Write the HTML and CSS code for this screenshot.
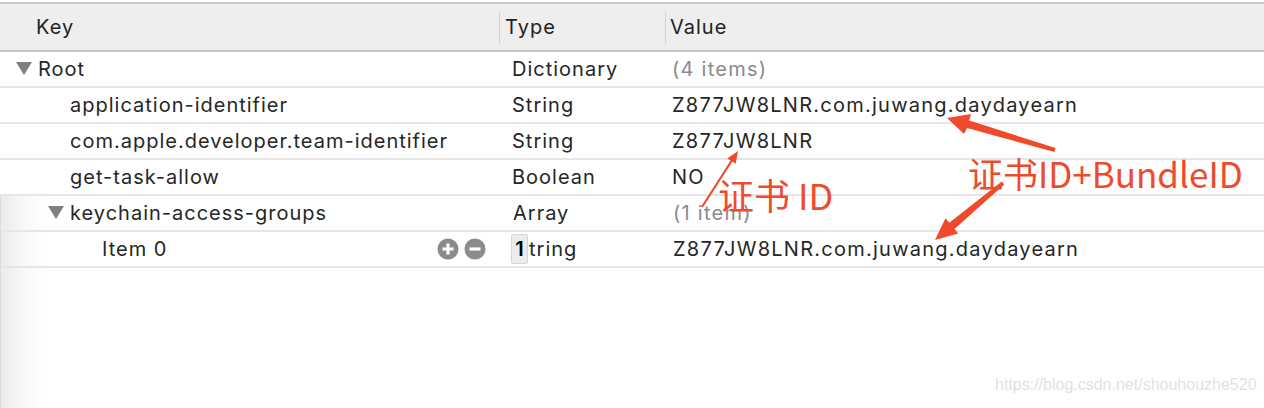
FILE: index.html
```html
<!DOCTYPE html>
<html>
<head>
<meta charset="utf-8">
<link rel="stylesheet" href="styles.css">
</head>
<body>
<div class="editor">
  <div class="header">
    <div class="hcell key-h">Key</div>
    <div class="hcell type-h">Type</div>
    <div class="hcell value-h">Value</div>
  </div>
  <div class="rows">
    <div class="row">
      <div class="cell key lvl0"><svg class="disc" viewBox="0 0 16 14"><polygon points="0,0 16,0 8,13" /></svg>Root</div>
      <div class="cell type">Dictionary</div>
      <div class="cell value muted">(4 items)</div>
    </div>
    <div class="row">
      <div class="cell key lvl1">application-identifier</div>
      <div class="cell type">String</div>
      <div class="cell value">Z877JW8LNR.com.juwang.daydayearn</div>
    </div>
    <div class="row">
      <div class="cell key lvl1">com.apple.developer.team-identifier</div>
      <div class="cell type">String</div>
      <div class="cell value">Z877JW8LNR</div>
    </div>
    <div class="row">
      <div class="cell key lvl1">get-task-allow</div>
      <div class="cell type">Boolean</div>
      <div class="cell value">NO</div>
    </div>
    <div class="lower">
      <div class="row">
        <div class="cell key lvl1b"><svg class="disc" viewBox="0 0 16 14"><polygon points="0,0 16,0 8,13" /></svg>keychain-access-groups</div>
        <div class="cell type">Array</div>
        <div class="cell value muted">(1 item)</div>
      </div>
      <div class="row">
        <div class="cell key lvl2">
          <span>Item 0</span>
          <span class="buttons">
            <svg class="btn" viewBox="0 0 22 22"><circle cx="11" cy="11" r="10.5"/><path d="M11 5.5v11M5.5 11h11"/></svg>
            <svg class="btn" viewBox="0 0 22 22"><circle cx="11" cy="11" r="10.5"/><path d="M5.5 11h11"/></svg>
          </span>
        </div>
        <div class="cell type"><span class="stepper">1</span>tring</div>
        <div class="cell value">Z877JW8LNR.com.juwang.daydayearn</div>
      </div>
      <div class="filler"></div>
    </div>
  </div>

  <div class="note note-id">证书 ID</div>
  <div class="note note-bundle">证书ID+BundleID</div>
  <svg class="arrows" viewBox="0 0 1264 408">
    <polygon points="947,118 971,114 969.2,120.4 1055.6,148.1 1054.4,151.9 967,128.1 964,134" />
    <polygon points="935,240 945.5,218.2 949.3,222.8 1001.7,181.5 1004.3,184.5 954.5,229 958.3,233.6" />
    <polygon points="738,151 735.7,163.8 732.4,161.6 702.9,207.6 701.1,206.4 730.6,160.6 727.3,158.4" />
  </svg>
  <div class="watermark">https://blog.csdn.net/shouhouzhe520</div>
</div>
</body>
</html>
```

FILE: styles.css
```css
html, body {
  margin: 0;
  padding: 0;
  background: #ffffff;
}

.editor {
  position: relative;
  width: 1264px;
  height: 408px;
  overflow: hidden;
  padding-top: 2px;
  box-sizing: border-box;
  font-family: "Inter", "Liberation Sans", sans-serif;
  font-size: 20px;
  letter-spacing: 1px;
  color: #262626;
  display: flex;
  flex-direction: column;
}

.header {
  display: grid;
  grid-template-columns: 499px 166px 1fr;
  height: 46px;
  background: #eeeeee;
  border-top: 2px solid #c9c9c9;
  border-bottom: 2px solid #c7c7c7;
  align-items: center;
}

.hcell {
  height: 100%;
  display: flex;
  align-items: center;
  color: #222222;
}

.key-h {
  padding-left: 36px;
}

.type-h,
.value-h {
  position: relative;
  padding-left: 6px;
}

.value-h {
  padding-left: 5px;
}

.type-h::before,
.value-h::before {
  content: "";
  position: absolute;
  left: 0;
  top: 8px;
  bottom: 6px;
  width: 1px;
  background: #d2d2d2;
}

.rows {
  flex: 1;
  display: flex;
  flex-direction: column;
}

.row {
  display: grid;
  grid-template-columns: 499px 166px 1fr;
  height: 34px;
  border-bottom: 2px solid #e6e6e6;
  align-items: center;
}

.cell {
  display: flex;
  align-items: center;
  white-space: nowrap;
}

.value {
  letter-spacing: 1.25px;
}

.disc {
  width: 16px;
  height: 14px;
  fill: #7f7f7f;
  margin-right: 6px;
}

.lvl0 { padding-left: 16px; }
.lvl1 { padding-left: 70px; }
.lvl1b { padding-left: 47px; }
.lvl2 {
  padding-left: 101px;
  justify-content: space-between;
  padding-right: 14px;
}

.type { padding-left: 13px; }
.value { padding-left: 7px; }
.muted { color: #8a8a8a; }

.buttons {
  display: flex;
  gap: 5px;
}

.btn {
  width: 22px;
  height: 22px;
}

.btn circle {
  fill: #8b8b8b;
}

.btn path {
  stroke: #ffffff;
  stroke-width: 3.2;
  fill: none;
}

.stepper {
  display: inline-flex;
  align-items: center;
  justify-content: center;
  width: 15px;
  height: 28px;
  margin-left: -2px;
  margin-right: 1px;
  background: #ececec;
  border: 1px solid #d6d6d6;
  border-radius: 2px;
  color: #000000;
  font-weight: 600;
  letter-spacing: 0;
}

.lower {
  flex: 1;
  display: flex;
  flex-direction: column;
  background: linear-gradient(to right, #ebebeb 0px, #f8f8f8 22px, #ffffff 44px);
  border-left: 1px solid #dcdcdc;
}

.filler {
  flex: 1;
}

.note {
  position: absolute;
  font-family: "Noto Sans CJK SC", sans-serif;
  font-size: 36px;
  line-height: 36px;
  letter-spacing: 0;
  color: #ef4a2c;
  white-space: nowrap;
}

.note-id {
  left: 718px;
  top: 176px;
}

.note-bundle {
  left: 968px;
  top: 155px;
  font-size: 35px;
}

.arrows {
  position: absolute;
  left: 0;
  top: 0;
  width: 1264px;
  height: 408px;
  fill: #ef4a2c;
  pointer-events: none;
}

.watermark {
  position: absolute;
  left: 995px;
  top: 376px;
  font-family: "Liberation Sans", sans-serif;
  font-size: 16px;
  letter-spacing: 0;
  color: #e2e2e2;
}
```
